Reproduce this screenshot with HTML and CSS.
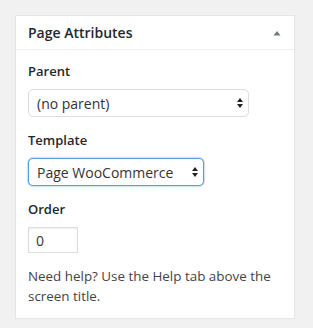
FILE: index.html
```html
<!DOCTYPE html>
<html>
<head>
<meta charset="utf-8">
<link rel="stylesheet" href="styles.css">
</head>
<body>
<div class="postbox">
  <div class="hndle">
    <h2 class="title">Page Attributes</h2>
    <svg class="toggle" width="10" height="6" viewBox="0 0 10 6"><path d="M1.5 5.5 L5 1 L8.5 5.5 Z" fill="#72777c"/></svg>
  </div>
  <div class="inside">
    <p class="label">Parent</p>
    <div class="select-wrap w1">
      <select class="select"><option>(no parent)</option></select>
      <svg class="arrows" width="8" height="12" viewBox="0 0 8 12"><path d="M4 1 L7 5 H1 Z M4 11 L7 7 H1 Z" fill="#222"/></svg>
    </div>
    <p class="label">Template</p>
    <div class="select-wrap w2 focus">
      <select class="select"><option>Page WooCommerce</option></select>
      <svg class="arrows" width="8" height="12" viewBox="0 0 8 12"><path d="M4 1 L7 5 H1 Z M4 11 L7 7 H1 Z" fill="#222"/></svg>
    </div>
    <p class="label">Order</p>
    <input class="order" type="text" value="0">
    <p class="help">Need help? Use the Help tab above the screen title.</p>
  </div>
</div>
</body>
</html>
```

FILE: styles.css
```css
html, body {
  margin: 0;
  padding: 0;
}
body {
  background: #f1f1f1;
  padding: 15px 0 0 15px;
  font-family: "Open Sans", "Liberation Sans", sans-serif;
  color: #444;
}
.postbox {
  width: 278px;
  background: #fff;
  border: 1px solid #e5e5e5;
  box-shadow: 0 1px 1px rgba(0,0,0,0.04);
}
.hndle {
  display: flex;
  align-items: center;
  justify-content: space-between;
  padding: 7px 12px;
  border-bottom: 1px solid #eee;
}
.title {
  margin: 0;
  font-size: 14px;
  font-weight: 600;
  line-height: 19px;
  color: #23282d;
}
.toggle {
  display: block;
  margin-top: 1px;
}
.inside {
  display: flex;
  flex-direction: column;
  align-items: flex-start;
  padding: 12px 12px 12px;
}
.label {
  margin: 0 0 9px;
  font-size: 13px;
  font-weight: 600;
  line-height: 18px;
  color: #23282d;
}
.select-wrap {
  position: relative;
  margin-bottom: 14px;
}
.select {
  -webkit-appearance: none;
  appearance: none;
  display: block;
  height: 28px;
  box-sizing: border-box;
  margin: 0;
  padding: 0 20px 0 8px;
  font-family: "Open Sans", "Liberation Sans", sans-serif;
  font-size: 14px;
  color: #333;
  background: #fff;
  border: 1px solid #ddd;
  border-radius: 5px;
  outline: none;
}
.w1 .select { width: 221px; }
.w2 .select { width: 176px; }
.focus .select {
  border-color: #5b9dd9;
  box-shadow: 0 0 2px rgba(30,140,190,0.8);
}
.arrows {
  position: absolute;
  right: 5px;
  top: 8px;
  pointer-events: none;
}
.order {
  width: 50px;
  height: 26px;
  box-sizing: border-box;
  margin: 0 0 13px;
  padding: 0 7px;
  font-family: "Open Sans", "Liberation Sans", sans-serif;
  font-size: 14px;
  color: #32373c;
  border: 1px solid #ddd;
  box-shadow: inset 0 1px 2px rgba(0,0,0,0.07);
  border-radius: 0;
  outline: none;
}
.help {
  margin: 0;
  font-size: 13.4px;
  line-height: 20px;
  color: #444;
}
```
